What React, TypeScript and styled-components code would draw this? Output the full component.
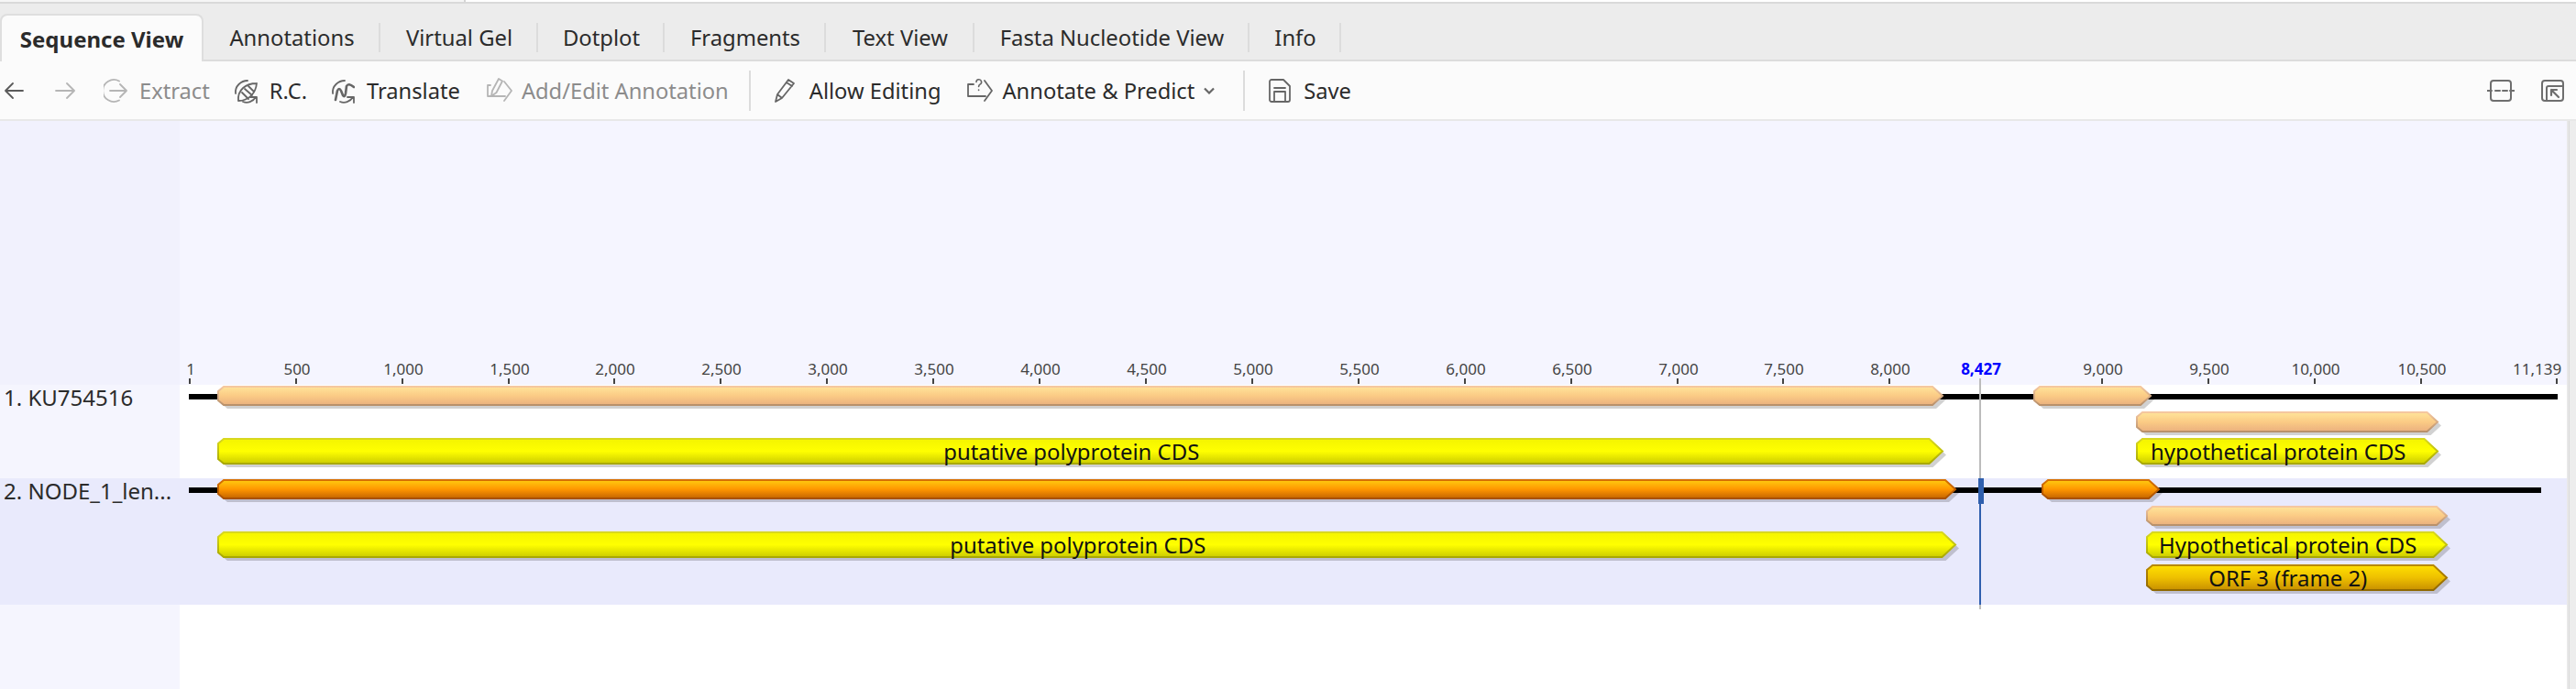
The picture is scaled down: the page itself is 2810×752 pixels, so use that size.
import React from 'react'
import styled, { createGlobalStyle } from 'styled-components'

const GlobalStyle = createGlobalStyle`
  html, body {
    margin: 0;
    padding: 0;
    height: 100%;
    overflow: hidden;
    background: #fff;
  }
  #root {
    height: 100%;
  }
`

const BASE_X = 10
const PX_PER_BASE = 0.23183

const Page = styled.div`
  display: flex;
  flex-direction: column;
  width: 2810px;
  height: 752px;
  font-family: 'Noto Sans', sans-serif;
  color: #2b2b2b;
`

const TopStrip = styled.div`
  height: 2px;
  background: #fff;
  border-bottom: 2px solid #d9d9d9;
  flex: none;
  display: flex;
`

const TopStripCorner = styled.div`
  width: 506px;
  height: 2px;
  background: #f6f6f6;
  border-right: 2px solid #d4d4d4;
`

const TabBar = styled.div`
  display: flex;
  align-items: flex-end;
  height: 63px;
  background: #ececec;
  box-shadow: inset 0 -2px 0 #dcdcdc;
  flex: none;
`

const ActiveTab = styled.div`
  display: flex;
  align-items: center;
  justify-content: center;
  box-sizing: border-box;
  width: 222px;
  height: 52px;
  background: #fbfbfb;
  border: 2px solid #dedede;
  border-bottom: 0;
  border-radius: 8px 8px 0 0;
  font-size: 24px;
  font-weight: 700;
`

const Tab = styled.div`
  display: flex;
  align-items: center;
  justify-content: center;
  width: ${({ $w }: { $w: number }) => $w}px;
  height: 52px;
  font-size: 23.8px;
  position: relative;
  &::after {
    content: '';
    position: absolute;
    right: 0;
    top: 10px;
    height: 32px;
    width: 2px;
    background: #dcdcdc;
  }
`

const Toolbar = styled.div`
  display: flex;
  align-items: center;
  height: 63px;
  background: #fbfbfb;
  border-bottom: 2px solid #e8e8e8;
  font-size: 23.7px;
  padding-left: 4px;
  flex: none;
`

const ToolButton = styled.div<{ $disabled?: boolean; $after: number; $gap?: number }>`
  display: flex;
  align-items: center;
  gap: ${({ $gap }) => $gap ?? 13}px;
  margin-right: ${({ $after }) => $after}px;
  color: ${({ $disabled }) => ($disabled ? '#8c8c8c' : '#2b2b2b')};
  white-space: nowrap;
  svg {
    flex: none;
    display: block;
  }
`

const ToolDivider = styled.div<{ $after: number }>`
  width: 2px;
  height: 44px;
  background: #dcdcdc;
  margin-right: ${({ $after }) => $after}px;
`

const ToolSpacer = styled.div`
  flex: 1;
`

const Viewer = styled.div`
  display: flex;
  flex: 1;
  min-height: 0;
`

const Gutter = styled.div`
  display: flex;
  flex-direction: column;
  width: 196px;
  flex: none;
  background: #f5f5fe;
`

const GutterHead = styled.div`
  height: 288px;
  background: #f1f1fd;
  flex: none;
`

const GutterRow = styled.div<{ $h: number; $alt?: boolean }>`
  height: ${({ $h }) => $h}px;
  background: ${({ $alt }) => ($alt ? '#e9eafc' : '#f5f5fe')};
  box-sizing: border-box;
  padding-left: 4px;
  font-size: 24px;
  line-height: 28px;
  color: #2b2b2b;
  white-space: nowrap;
  flex: none;
`

const Tracks = styled.div`
  position: relative;
  display: flex;
  flex-direction: column;
  flex: 1;
  min-width: 0;
  background: #fff;
`

const Ruler = styled.div`
  position: relative;
  height: 288px;
  background: #f5f5ff;
  flex: none;
`

const RulerMark = styled.div<{ $x: number; $current?: boolean; $end?: boolean }>`
  position: absolute;
  left: ${({ $x }) => $x}px;
  bottom: 1px;
  width: 2px;
  height: 6px;
  background: #444;
  &::before {
    content: attr(data-label);
    position: absolute;
    bottom: 6px;
    left: ${({ $end }) => ($end ? '-47px' : '2px')};
    transform: ${({ $end }) => ($end ? 'none' : 'translateX(-50%)')};
    font-size: 17px;
    line-height: 20px;
    white-space: nowrap;
    color: ${({ $current }) => ($current ? '#0000ff' : '#444')};
    font-weight: ${({ $current }) => ($current ? 700 : 400)};
  }
`

const Row = styled.div<{ $h: number; $alt?: boolean }>`
  position: relative;
  height: ${({ $h }) => $h}px;
  background: ${({ $alt }) => ($alt ? '#e9eafc' : '#fff')};
  flex: none;
`

const Backbone = styled.div<{ $w: number }>`
  position: absolute;
  left: 10px;
  top: 10px;
  height: 6px;
  width: ${({ $w }) => $w}px;
  background: #000;
`

const Annotation = styled.div<{ $x: number; $y: number; $w: number; $h: number }>`
  position: absolute;
  left: ${({ $x }) => $x}px;
  top: ${({ $y }) => $y}px;
  width: ${({ $w }) => $w}px;
  height: ${({ $h }) => $h}px;
  box-sizing: border-box;
  padding-right: ${({ $h }) => $h / 2 + 4}px;
  display: flex;
  align-items: center;
  justify-content: center;
  font-size: 23.9px;
  color: #111;
  svg {
    position: absolute;
    left: 0;
    top: 0;
    overflow: visible;
  }
  span {
    position: relative;
    white-space: nowrap;
  }
`

const CursorLine = styled.div`
  position: absolute;
  left: 1963px;
  top: 281px;
  width: 2px;
  height: 252px;
  background: #bcbcbc;
`

const CursorBlue = styled.div`
  position: absolute;
  left: 1963px;
  top: 390px;
  width: 2px;
  height: 138px;
  background: #2f5fae;
`

const CursorCap = styled.div`
  position: absolute;
  left: 1962px;
  top: 390px;
  width: 6px;
  height: 28px;
  background: #2f5fae;
`

const Scrollbar = styled.div`
  width: 7px;
  flex: none;
  background: #ededed;
  border-left: 1px solid #dadada;
  box-shadow: -2px 0 0 #e8e8e8;
  margin-left: 2px;
`

type Kind = 'peach' | 'yellow' | 'orange' | 'gold'

const KINDS: Record<Kind, { stops: string[]; edge: string[] }> = {
  peach: { stops: ['#ffe49a', '#fbcb85', '#eab07e'], edge: ['#f6c8a0', '#b8906a'] },
  yellow: { stops: ['#f4f400', '#ffff00', '#cccc00'], edge: ['#d8d820', '#a8a800'] },
  orange: { stops: ['#ffcc10', '#ff9600', '#c46400'], edge: ['#d87000', '#a85000'] },
  gold: { stops: ['#ffe000', '#eec000', '#c89000'], edge: ['#b88800', '#906800'] },
}

const AnnotationShape = ({ kind, w, h }: { kind: Kind; w: number; h: number }) => {
  const head = h / 2
  const d = `M1 6L7 1H${w - head}L${w} ${h / 2}L${w - head} ${h - 1}H7L1 ${h - 6}Z`
  return (
    <svg width={w} height={h} viewBox={`0 0 ${w} ${h}`}>
      <defs>
        <linearGradient id={`fill-${kind}`} x1="0" y1="0" x2="0" y2="1">
          {KINDS[kind].stops.map((c, i) => (
            <stop key={c} offset={`${i * 50}%`} stopColor={c} />
          ))}
        </linearGradient>
        <linearGradient id={`edge-${kind}`} x1="0" y1="0" x2="0" y2="1">
          <stop offset="0%" stopColor={KINDS[kind].edge[0]} />
          <stop offset="100%" stopColor={KINDS[kind].edge[1]} />
        </linearGradient>
      </defs>
      <path d={d} transform="translate(4 4)" fill="#000" fillOpacity="0.18" />
      <path d={d} fill={`url(#fill-${kind})`} stroke={`url(#edge-${kind})`} strokeWidth="2" />
    </svg>
  )
}

const Feature = ({
  kind,
  x,
  y,
  x2,
  h,
  label,
}: {
  kind: Kind
  x: number
  y: number
  x2: number
  h: number
  label?: string
}) => (
  <Annotation $x={x - 196} $y={y} $w={x2 - x} $h={h}>
    <AnnotationShape kind={kind} w={x2 - x} h={h} />
    {label && <span>{label}</span>}
  </Annotation>
)

const Icon = ({
  w = 26,
  children,
  color = '#5a5a5a',
}: {
  w?: number
  children: React.ReactNode
  color?: string
}) => (
  <svg
    width={w}
    height={28}
    viewBox={`0 0 ${w} 28`}
    fill="none"
    stroke={color}
    strokeWidth="1.8"
    strokeLinecap="round"
    strokeLinejoin="round"
  >
    {children}
  </svg>
)

const TICKS = [500, 1000, 1500, 2000, 2500, 3000, 3500, 4000, 4500, 5000, 5500, 6000, 6500, 7000, 7500, 8000, 9000, 9500, 10000, 10500]

const rulerX = (base: number) => Math.round(BASE_X + (base - 1) * PX_PER_BASE)

const App = () => (
  <Page>
    <GlobalStyle />
    <TopStrip>
      <TopStripCorner />
    </TopStrip>
    <TabBar>
      <ActiveTab>Sequence View</ActiveTab>
      <Tab $w={193}>Annotations</Tab>
      <Tab $w={172}>Virtual Gel</Tab>
      <Tab $w={138}>Dotplot</Tab>
      <Tab $w={176}>Fragments</Tab>
      <Tab $w={162}>Text View</Tab>
      <Tab $w={300}>Fasta Nucleotide View</Tab>
      <Tab $w={100}>Info</Tab>
    </TabBar>
    <Toolbar>
      <ToolButton $after={34}>
        <Icon w={22}>
          <path d="M21 14H2M10 6l-8 8 8 8" />
        </Icon>
      </ToolButton>
      <ToolButton $after={31} $disabled>
        <Icon w={22} color="#b5b5b5">
          <path d="M1 14h19M13 6l8 8-8 8" />
        </Icon>
      </ToolButton>
      <ToolButton $after={26} $disabled>
        <Icon color="#b5b5b5">
          <path d="M17 3.5A12 12 0 1 0 17 24.5M7 14h18M18 7l7 7-7 7" />
        </Icon>
        Extract
      </ToolButton>
      <ToolButton $after={26}>
        <Icon color="#666">
          <path d="M2 17C1 9 8 3 15 3" />
          <path d="M10 26C15 28 21 26 24 21M18 21h7v6" />
          <path d="M5 25C4 13 13 6 25 6M5 25C17 25 24 16 25 6" />
          <path d="M9 16l7 7M12 12l8 7M16 9l6 6" />
        </Icon>
        R.C.
      </ToolButton>
      <ToolButton $after={29}>
        <Icon color="#666">
          <path d="M2 17C1 9 8 3 15 3" />
          <path d="M10 26C15 28 21 26 24 21M18 21h7v6" />
          <path
            d="M5 24L7 14Q9 10 11 14L13 19Q15 22 16 17L17 9Q19 5 25 10"
            strokeWidth="2.6"
          />
        </Icon>
        Translate
      </ToolButton>
      <ToolButton $after={22} $gap={10} $disabled>
        <Icon w={28} color="#b5b5b5">
          <path d="M4 8H1v12h19M19 4l8 10-8 11" />
          <path d="M5 20l1-6L13 1l4 2.5-6.5 12.5z" />
        </Icon>
        Add/Edit Annotation
      </ToolButton>
      <ToolDivider $after={25} />
      <ToolButton $after={29}>
        <Icon color="#666">
          <path d="M2 26l2-8L16 2l6 4-13 16zM4 18l5 4M14 5l6 4" />
        </Icon>
        Allow Editing
      </ToolButton>
      <ToolButton $after={31} $gap={10}>
        <Icon w={28} color="#666">
          <path d="M7 7H1v13h19M19 3l8 11-8 11" />
          <path d="M10 4.5a2.8 2.8 0 1 1 4 2.6c-1 .6-1.4 1-1.4 2.4M12.6 13v.4" strokeWidth="1.6" />
        </Icon>
        Annotate &amp; Predict
        <svg width="12" height="8" viewBox="0 0 12 8" fill="none" stroke="#666" strokeWidth="2.2">
          <path d="M1 1.5l5 5 5-5" />
        </svg>
      </ToolButton>
      <ToolDivider $after={25} />
      <ToolButton $after={0}>
        <Icon color="#666">
          <path d="M4 2h13l7 7v15a2 2 0 0 1-2 2H4a2 2 0 0 1-2-2V4a2 2 0 0 1 2-2zM7 26V15h12v11M7 11h12" />
        </Icon>
        Save
      </ToolButton>
      <ToolSpacer />
      <ToolButton $after={29}>
        <Icon w={30} color="#6e6e6e">
          <rect x="4" y="3" width="22" height="22" rx="3" strokeWidth="2" />
          <path d="M0 14h5M9 14h5M17 14h5M25 14h5" strokeWidth="2" />
        </Icon>
      </ToolButton>
      <ToolButton $after={13}>
        <Icon w={25} color="#6e6e6e">
          <rect x="1" y="3" width="23" height="22" rx="3" strokeWidth="2" />
          <path d="M6 25V11a2 2 0 0 1 2-2h16" strokeWidth="2" />
          <path d="M11 13h6M11 13v6M11 13l8 8" strokeWidth="2.2" />
        </Icon>
      </ToolButton>
    </Toolbar>
    <Viewer>
      <Gutter>
        <GutterHead />
        <GutterRow $h={102}>1. KU754516</GutterRow>
        <GutterRow $h={138} $alt>
          2. NODE_1_len...
        </GutterRow>
      </Gutter>
      <Tracks>
        <Ruler>
          <RulerMark $x={rulerX(1)} data-label="1" />
          {TICKS.map((t) => (
            <RulerMark key={t} $x={rulerX(t)} data-label={t.toLocaleString('en-US')} />
          ))}
          <RulerMark $x={rulerX(8427)} data-label="8,427" $current />
          <RulerMark $x={rulerX(11139)} data-label="11,139" $end />
        </Ruler>
        <Row $h={102}>
          <Backbone $w={2584} />
          <Feature kind="peach" x={237} y={1} x2={2119} h={22} />
          <Feature kind="peach" x={2218} y={1} x2={2346} h={22} />
          <Feature kind="peach" x={2330} y={29} x2={2659} h={23} />
          <Feature kind="yellow" x={237} y={58} x2={2119} h={29} label="putative polyprotein CDS" />
          <Feature kind="yellow" x={2330} y={58} x2={2659} h={29} label="hypothetical protein CDS" />
        </Row>
        <Row $h={138} $alt>
          <Backbone $w={2566} />
          <Feature kind="orange" x={237} y={1} x2={2133} h={22} />
          <Feature kind="orange" x={2227} y={1} x2={2355} h={22} />
          <Feature kind="peach" x={2341} y={30} x2={2669} h={22} />
          <Feature kind="yellow" x={237} y={58} x2={2133} h={29} label="putative polyprotein CDS" />
          <Feature kind="yellow" x={2341} y={58} x2={2669} h={29} label="Hypothetical protein CDS" />
          <Feature kind="gold" x={2341} y={94} x2={2669} h={29} label="ORF 3 (frame 2)" />
        </Row>
        <CursorLine />
        <CursorBlue />
        <CursorCap />
      </Tracks>
      <Scrollbar />
    </Viewer>
  </Page>
)

export default App
